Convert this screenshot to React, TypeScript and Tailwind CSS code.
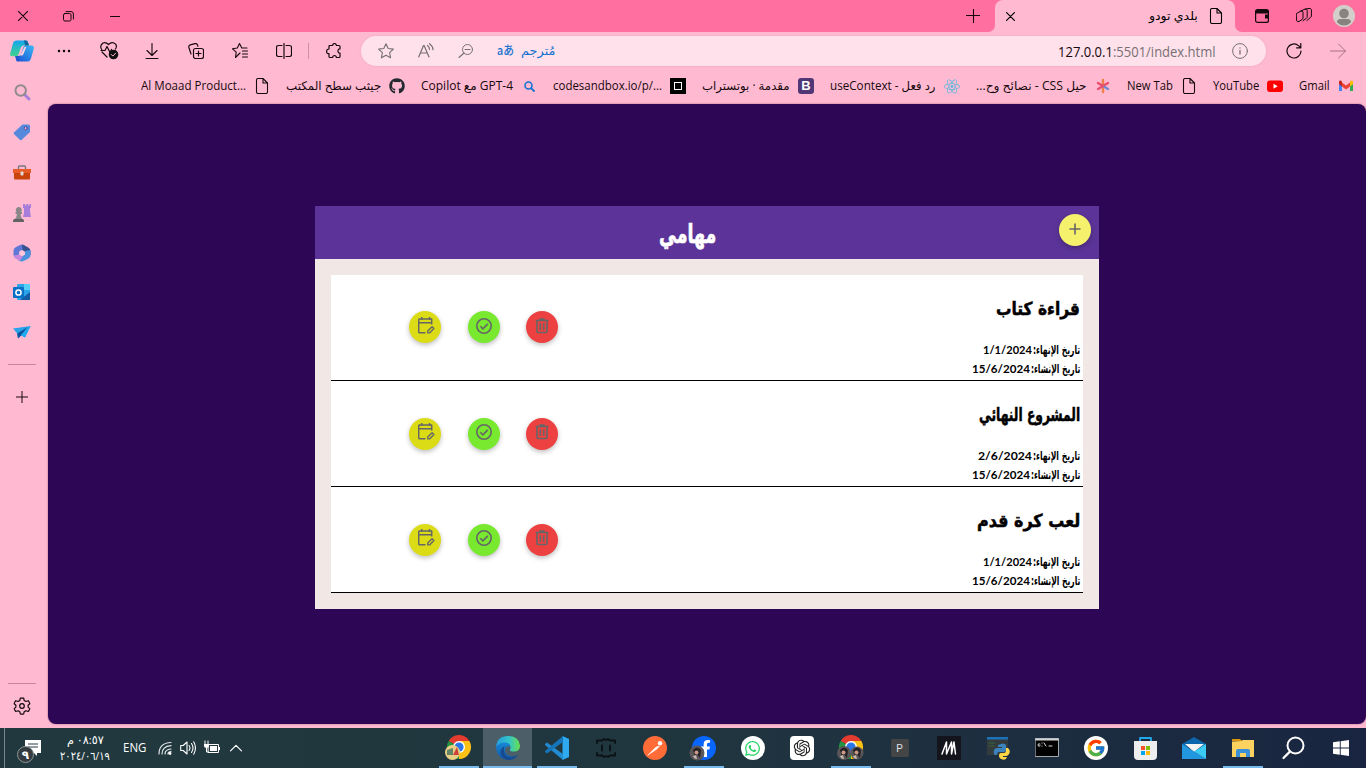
import React, { ReactNode, useLayoutEffect, useRef, useState } from 'react';
import { FaGithub, FaReact, FaWhatsapp, FaFacebookF } from 'react-icons/fa';
import { FcGoogle } from 'react-icons/fc';
import { RiOpenaiFill } from 'react-icons/ri';

const UI = "font-['Open_Sans','DejaVu_Sans',sans-serif]";

/* Text that is stretched or condensed to the width of its box. */
function Fit({ children, className = '', rtl = false }: { children: ReactNode; className?: string; rtl?: boolean }) {
  const outer = useRef<HTMLDivElement>(null);
  const inner = useRef<HTMLSpanElement>(null);
  const [scale, setScale] = useState(1);
  useLayoutEffect(() => {
    if (outer.current && inner.current) setScale(outer.current.clientWidth / inner.current.offsetWidth);
  }, []);
  return (
    <div ref={outer} dir="ltr" className={`flex shrink-0 ${className}`}>
      <span ref={inner} dir={rtl ? 'rtl' : 'ltr'} className="shrink-0 origin-left whitespace-nowrap" style={{ transform: `scaleX(${scale})` }}>
        {children}
      </span>
    </div>
  );
}

function Svg({ children, className = 'size-4', box = '0 0 16 16' }: { children: ReactNode; className?: string; box?: string }) {
  return (
    <svg viewBox={box} className={`shrink-0 ${className}`} fill="none" stroke="currentColor" strokeLinecap="round" strokeLinejoin="round">
      {children}
    </svg>
  );
}

const Doc = () => (
  <Svg><path d="M4 .5h5l4.500 4.500v9q0 1.500-1.500 1.500H4q-1.500 0-1.500-1.500V2Q2.500 .5 4 .5zM9 .5V5h4.500" strokeWidth="1.1" /></Svg>
);

function Cell({ children, className = 'w-11' }: { children: ReactNode; className?: string }) {
  return <div className={`flex shrink-0 items-center justify-center ${className}`}>{children}</div>;
}

function TitleBar() {
  return (
    <div className="flex h-8 shrink-0 justify-between bg-[#ff6fa0]">
      <div className="flex">
        <Cell className="w-[46px]"><Svg className="size-[10px]" box="0 0 10 10"><path d="M.3.3l9.400 9.400M9.700.3L.3 9.700" strokeWidth="1.1" /></Svg></Cell>
        <Cell className="w-[45px]"><Svg className="size-[11px]" box="0 0 11 11"><rect x=".5" y="2.500" width="7.500" height="7.500" rx="1.500" /><path d="M3 .6h5q2.400 0 2.400 2.400v5" /></Svg></Cell>
        <Cell className="ml-px w-[46px]"><Svg className="size-[10px]" box="0 0 10 10"><path d="M0 5.500h10" strokeLinecap="butt" /></Svg></Cell>
      </div>
      <div className="flex">
        <Cell className="w-[31px]"><Svg className="size-[14px]" box="0 0 14 14"><path d="M7.500 0v14M0 6.500h14" strokeWidth="1.1" /></Svg></Cell>
        <div className="flex w-[7px] shrink-0 items-end justify-end bg-[#ffbad2]"><div className="h-8 w-[7px] rounded-br-[7px] bg-[#ff6fa0]" /></div>
        <div className={`flex w-[240px] items-center rounded-t-lg bg-[#ffbad2] pl-[11px] pr-[11px] text-[12px] text-black ${UI}`}>
          <Svg className="size-[9px]" box="0 0 9 9"><path d="M.6.6l7.800 7.800M8.400.6L.6 8.400" strokeWidth="1.2" /></Svg>
          <div className="grow" />
          <Fit rtl className="w-[49px]">بلدي تودو</Fit>
          <div className="w-[10px]" />
          <Doc />
        </div>
        <div className="flex w-[131px] bg-[#ffbad2]">
          <div className="flex grow rounded-bl-[7px] bg-[#ff6fa0]">
            <Cell className="w-[54px]"><Svg className="size-[14px]" box="0 0 14 14"><rect x=".6" y=".6" width="12.800" height="12.800" rx="2" strokeWidth="1.200" /><path d="M.8 1h12.500v3.500H.8zM10 5.500h3.400v4H10z" fill="currentColor" stroke="none" /></Svg></Cell>
            <Cell className="w-[30px]"><Svg className="size-4"><path d="M.6 5.500l4-2.300q2-.8 2.400.8v6q0 1-1 1.500L3 13.500q-2 .8-2.400-1zM4.500 3.200L8.800 1.200q2-.7 2.400 1v6.500q0 1.200-1 1.800L7 12.700M9 1.200L13 .4q2-.3 2.400 1.300V8q0 1-1 1.500l-3.500 3" /></Svg></Cell>
            <Cell className="w-[50px]"><Svg className="size-[22px]" box="0 0 22 22"><circle cx="11" cy="11" r="11" fill="#d2cfcb" stroke="none" /><circle cx="11" cy="8.500" r="4.800" fill="#89837e" stroke="none" /><path d="M4 17q0-3 4-3h6q4 0 4 3-3 3.500-7 3.500T4 17z" fill="#89837e" stroke="none" /></Svg></Cell>
          </div>
        </div>
      </div>
    </div>
  );
}

function Copilot() {
  return (
    <Svg className="size-6" box="0 0 24 24">
      <defs>
        <linearGradient id="ca" x1="0" y1="0" x2="0" y2="1"><stop stopColor="#12a7ee" /><stop offset="1" stopColor="#3fd28c" /></linearGradient>
        <linearGradient id="cb" x1="1" y1="0" x2="0" y2="1"><stop stopColor="#38b9f5" /><stop offset="1" stopColor="#1b4fd4" /></linearGradient>
      </defs>
      <path d="M6 1.500h10q1.500 0 2 2l1 3h-5q-2.500 0-3.500 3l-2 6q-.6 1.700-2 1.700H2q-2.500 0-1.700-3L3 4q.8-2.500 3-2.500z" fill="url(#ca)" stroke="none" />
      <path d="M18 22.500H8q-1.500 0-2-2l-1-3.500h3q2.500 0 3.500-3l2-6q.6-1.500 2.500-1.500h5.500q3 0 2.300 3L21 19.500q-.8 3-3 3z" fill="url(#cb)" stroke="none" />
      <path d="M14 1.500h2q1.500 0 2 2l1 3h-4z" fill="#12679e" stroke="none" />
      <path d="M6 17h4l-2 5.500q-1.500 0-2-2z" fill="#2056d0" stroke="none" />
      <path d="M14.500 8h1.800l-2.800 7q-.6 1.500-2.300 1.500H9.500q1.500-.8 2.200-2.800z" fill="#ffd3e0" stroke="none" />
    </Svg>
  );
}

function Toolbar() {
  return (
    <div className="flex h-10 shrink-0 items-center pb-[2px]">
      <Cell className="w-[42px] pl-[2px]"><Copilot /></Cell>
      <Cell><Svg className="size-4"><path d="M3 8h.01M8 8h.01M13 8h.01" strokeWidth="2.500" /></Svg></Cell>
      <Cell className="w-11 pl-[2px]"><Svg className="size-5" box="0 0 20 20"><path d="M3 9Q0 5 4 2q3-1 5.500 1.500Q12 1 15 2q4 2 1.500 6M3 11l5 5M2 9.500h4l2-4 3 6 1.500-3" strokeWidth="1.200" /><circle cx="14.500" cy="13.500" r="4.800" fill="#111" stroke="none" /><path d="M12.300 13.500l1.600 1.600 2.800-3" stroke="#ffbad2" /></Svg></Cell>
      <Cell><Svg><path d="M8 .5v12M3 7.500l5 5 5-5M2 15.500h12" strokeWidth="1.100" /></Svg></Cell>
      <Cell><Svg><rect x="5.500" y="5.500" width="10" height="10" rx="2" strokeWidth="1.200" /><path d="M10.500 8v5M8 10.500h5M3 11L.9 4.500q-.5-2 1.300-2.600L7 .6q2-.4 2.600 1.500l.3 1.200" strokeWidth="1.200" /></Svg></Cell>
      <Cell><Svg><path d="M8 10L3.500 14.500 4.200 9.200.5 5.800l4.800-.8L7.500.6 9.800 5H15M10.500 8h5M10.500 11h5M10.500 14h5" strokeWidth="1.100" /></Svg></Cell>
      <Cell><Svg><path d="M6 2.500H2.500Q.5 2.500.5 4.500v7q0 2 2 2H6M10 2.500h3.500q2 0 2 2v7q0 2-2 2H10M8 .5v15" strokeWidth="1.200" /></Svg></Cell>
      <div className="ml-[2px] h-4 w-px bg-[#cf8fa6]" />
      <Cell className="ml-[3px] w-[44px]"><Svg><path d="M4 2.500h2.500Q7 .5 8.500.5t2 2H13q1 0 1 1V6q-2-.3-2 2t2 2v3.500q0 1-1 1h-2.500q-.5-2-2-2t-2 2H4q-1 0-1-1v-3Q.6 11 .6 8.500T3 6V3.500q0-1 1-1z" strokeWidth="1.200" /></Svg></Cell>
      <div className={`ml-[5px] flex h-[30px] w-[905px] items-center rounded-full bg-[#ffe1eb] pl-[5px] text-[#767073] shadow-[0_0_3px_#f0a6c0] ${UI}`}>
        <Cell className="w-10"><Svg><path d="M8 .8l2.200 4.700 5.200.6-3.800 3.600 1 5.100L8 12.300l-4.600 2.500 1-5.100L.6 6.100l5.200-.6z" strokeWidth="1.100" /></Svg></Cell>
        <Cell className="w-10"><Svg><path d="M.7 14L5.500 2.500h.6L11 14M2.600 10h6.500M9.500 2.500q2 1.500 2 4M11.500.7q3.500 2.500 3.500 6" strokeWidth="1.200" /></Svg></Cell>
        <Cell className="w-10"><Svg><circle cx="9.500" cy="6.500" r="5" /><path d="M7 6.500h5M6 10L1 14.500" strokeWidth="1.100" /></Svg></Cell>
        <div className="ml-[11px] w-[17px] font-['Noto_Sans_CJK_JP',sans-serif] text-[12px] leading-[20px] text-[#1473cf]"><Fit className="w-[17px] pb-[3px]"><b className="font-[500]">aあ</b></Fit></div>
        <Fit rtl className="ml-[7px] w-[34px] text-[12.500px] text-[#1473cf]">مُترجم</Fit>
        <div className="grow" />
        <Fit className="w-[158px] text-[14px]"><span className="text-[#16080d]">127.0.0.1</span>:5501/index.html</Fit>
        <div className="ml-[16px] mr-[18px]"><Svg><circle cx="8" cy="8" r="7.400" /><path d="M8 7.500V11M8 5v.01" strokeWidth="1.300" /></Svg></div>
      </div>
      <Cell className="ml-[6px] w-[44px]"><Svg><path d="M15 8A7 7 0 1 1 12.500 2.600L14.500 4.500M14.800.5v4.300h-4.300" strokeWidth="1.200" /></Svg></Cell>
      <Cell><Svg className="size-4 text-[#a5727f]"><path d="M.5 8h15M8.500 1l7 7-7 7" /></Svg></Cell>
    </div>
  );
}

function Bookmark({ text, w, icon, rtl = false }: { text: string; w: string; icon: ReactNode; rtl?: boolean }) {
  return (
    <div className="mr-4 flex shrink-0 items-center gap-2">
      <Fit rtl={rtl} className={w}>{text}</Fit>
      <div className="flex size-4 shrink-0 items-center justify-center">{icon}</div>
    </div>
  );
}

function Bookmarks() {
  return (
    <div className={`flex h-8 shrink-0 items-center overflow-hidden pb-[4px] pl-[93px] text-[12px] text-[#16080d] ${UI}`}>
      <Bookmark w="w-[105px]" text="Al Moaad Product..." icon={<Doc />} />
      <Bookmark rtl w="w-[95px]" text="جيثب سطح المكتب" icon={<FaGithub size={16} color="#24292f" />} />
      <Bookmark w="w-[92px]" text="Copilot مع GPT-4" icon={<Svg className="size-[11px]" box="0 0 11 11"><circle cx="4.500" cy="4.500" r="3.500" stroke="#1473cf" strokeWidth="1.600" /><path d="M7.300 7.300L10 10" stroke="#1473cf" strokeWidth="1.800" /></Svg>} />
      <Bookmark w="w-[109px]" text="codesandbox.io/p/..." icon={<div className="flex size-4 items-center justify-center bg-black"><div className="size-2 border border-white" /></div>} />
      <Bookmark rtl w="w-[88px]" text="مقدمة · بوتستراب" icon={<div className="flex size-4 items-center justify-center rounded-[3px] bg-[#513776] font-['Liberation_Sans',sans-serif] text-[13px] font-bold text-white">B</div>} />
      <Bookmark w="w-[106px]" text="useContext - رد فعل" icon={<FaReact size={17} color="#58b8de" />} />
      <Bookmark rtl w="w-[111px]" text="حيل CSS - نصائح وح..." icon={<Svg className="size-4"><path d="M8 8V2M8 8v6" stroke="#f08044" strokeWidth="2.400" /><path d="M8 8l5-3M8 8L3 5" stroke="#ea4e68" strokeWidth="2.400" /><path d="M8 8l5 3" stroke="#728bcf" strokeWidth="2.400" /><path d="M8 8l-5 3" stroke="#e85175" strokeWidth="2.400" /></Svg>} />
      <Bookmark w="w-[46px]" text="New Tab" icon={<Doc />} />
      <Bookmark w="w-[46px]" text="YouTube" icon={<Svg><rect y="2.500" width="16" height="11.500" rx="3" fill="#f00" stroke="none" /><path d="M6.500 5.800v5l4.200-2.500z" fill="#fff" stroke="none" /></Svg>} />
      <Bookmark w="w-[31px]" text="Gmail" icon={<Svg><path d="M1 4v9h3V6z" fill="#4285f4" stroke="none" /><path d="M12 6v7h3V4z" fill="#34a853" stroke="none" /><path d="M4 4.500L8 7.500l4-3V8.500L8 11.500 4 8.500z" fill="#ea4335" stroke="none" /><path d="M1 4q0-2 2-1.300l1 .8v5L1 6.300z" fill="#c5221f" stroke="none" /><path d="M15 4q0-2-2-1.300l-1 .8v5l3-2.200z" fill="#fbbc04" stroke="none" /></Svg>} />
    </div>
  );
}

function Sidebar() {
  const c = 'h-10 w-11';
  return (
    <div className="flex w-12 shrink-0 flex-col">
      <Cell className={c}><Svg className="size-[17px]" box="0 0 17 17"><path d="M10.500 10.500l4.500 4.500" stroke="#a87fdd" strokeWidth="3" /><circle cx="6.700" cy="6.500" r="5.200" stroke="#918b8e" strokeWidth="2" /></Svg></Cell>
      <Cell className={c}><Svg className="size-[18px]" box="0 0 18 18"><path d="M9.500 1.500h6q1.500 0 1.500 1.500v6L8.800 16.800q-1 .8-2 0L1.200 11.300q-.9-1 0-2z" fill="#5688dc" stroke="none" /><circle cx="12.700" cy="5.200" r="1.500" fill="#fbd" stroke="#514a9b" /></Svg></Cell>
      <Cell className={c}><Svg className="mt-px size-[18px]" box="0 0 18 18"><path d="M5.500 5V3q0-1 1-1h5q1 0 1 1v2" stroke="#77777c" strokeWidth="1.400" /><path d="M0 5h18v4H0z" fill="#e65b27" stroke="none" /><path d="M1 9h16v5.500q0 1-1 1H2q-1 0-1-1z" fill="#ca420c" stroke="none" /><rect x="7.500" y="7.500" width="3" height="4" rx="1" fill="#ddd" stroke="none" /></Svg></Cell>
      <Cell className={c}><Svg className="mt-px size-[18px]" box="0 0 18 18"><path d="M10 0h2v1.500h1.200V0h2v1.500h1.200V0H18v4h-1l.2 5 .8 4h-8l1-4V4h-1z" fill="#a67ddb" stroke="none" /><path d="M6 3a3 3 0 0 1 2 5h1v2H7.500l1 4q2.500 1 2.500 4H0q0-3 3-4l1-4H2.500V8h1A3 3 0 0 1 6 3z" fill="#8b8789" stroke="none" /><path d="M0 18q0-3 2-3h7q2 0 2 3z" fill="#646166" stroke="none" /></Svg></Cell>
      <Cell className={c}><Svg className="mt-px size-[18px]" box="0 0 18 18"><path d="M9 .5q3 0 3.500 2L10 6 6.500 7v5L3 14.500Q.5 13 .5 10.500V7Q.5 4 3 3l4-2z" fill="#5f78d8" stroke="none" /><path d="M9 .5l5 2.300q3.500 1.500 3.500 5v3.500L12 8 9.500 6z" fill="#35518f" stroke="none" /><path d="M17.500 6v5q0 2.500-2 3.500l-5 2.500q-2 1-5-.5L9 12l3-1.500V7z" fill="#4c91de" stroke="none" /><path d="M.5 11.500l6-1L10 12l-3 5-4.500-2.500Q.5 13 .5 11.500z" fill="#c388dd" stroke="none" /><path d="M9 6.200l2.700 1.500v3L9 12.200l-2.700-1.500v-3z" fill="#ffc4da" stroke="none" /></Svg></Cell>
      <Cell className={c}><Svg className="size-[18px]" box="0 0 18 18"><rect x="4" y="1" width="13" height="16" rx="1" fill="#29a4e8" stroke="none" /><path d="M11 1h6v6h-6z" fill="#57d0f5" stroke="none" /><path d="M17 9v8H7z" fill="#155ca7" stroke="none" /><rect x="0" y="4" width="11" height="11" rx="1" fill="#0870c5" stroke="none" /><circle cx="5.500" cy="9.500" r="2.600" stroke="#fff" strokeWidth="1.500" /></Svg></Cell>
      <Cell className={c}><Svg className="size-[18px]" box="0 0 18 18"><path d="M0 5.500L17.500 3 12 14.500l-4-2-3 3-.8-5z" fill="#28a2e8" stroke="none" /><path d="M4.200 10.500L14 4.500 8 12.500l-3 3z" fill="#0b519c" stroke="none" /><path d="M8 12l9.500-9L12 14.500z" fill="#20aaf0" stroke="none" /></Svg></Cell>
      <div className="ml-2 mt-[12px] h-px w-7 bg-[#c9869b]" />
      <Cell className="mt-[22px] h-5 w-[43px]"><Svg className="size-3" box="0 0 12 12"><path d="M6 0v12M0 6h12" /></Svg></Cell>
      <div className="grow" />
      <div className="ml-2 h-px w-7 bg-[#c9869b]" />
      <Cell className="mb-[12px] mt-[12px] h-5 w-11"><Svg className="size-[18px]" box="0 0 18 18"><path d="M9 1q1 0 1.700.2l.5 2.300 1.700 1 2.300-.8q1 1.200 1.600 3l-1.700 1.500v1.900l1.700 1.500q-.5 1.600-1.600 2.900l-2.300-.8-1.700 1-.5 2.200q-1.700.4-3.400 0l-.5-2.200-1.700-1-2.300.8Q1.700 13.300 1.200 11.600l1.700-1.500V8.200L1.200 6.700q.5-1.700 1.600-3l2.300.8 1.700-1 .5-2.300z" strokeWidth="1.200" /><circle cx="9" cy="9" r="2.300" strokeWidth="1.200" /></Svg></Cell>
    </div>
  );
}

const Trash = () => (
  <Svg className="size-4"><path d="M1.700 2.500h12.600M5.300 1.100h5.400M3 3v10.500q0 1 1 1h8q1 0 1-1V3M6.300 5.300v6.700M9.700 5.300v6.700" stroke="#666" strokeWidth="1.600" strokeLinecap="butt" /></Svg>
);
const Check = () => (
  <Svg className="size-4"><circle cx="8" cy="8" r="7.200" stroke="#666" strokeWidth="1.600" /><path d="M4.300 8.200l2.600 2.600 4.900-4.900" stroke="#666" strokeWidth="1.600" strokeLinecap="butt" strokeLinejoin="miter" /></Svg>
);
const EditCalendar = () => (
  <Svg className="size-[17px]" box="0 0 17 17">
    <path d="M3.700 0v3M11.500 0v3M7.500 15.700H1.700q-1 0-1-1V3q0-1 1-1h12v5.500M.7 5.800h13" stroke="#666" strokeWidth="1.500" strokeLinecap="butt" />
    <path d="M9.800 15.900v-1.800l4.300-4.300 1.800 1.800-4.300 4.300z" stroke="#666" strokeWidth="1.400" />
  </Svg>
);

function Round({ color, children }: { color: string; children: ReactNode }) {
  return <div className={`flex size-8 shrink-0 items-center justify-center rounded-full shadow-[0_2px_5px_rgba(0,0,0,0.26)] ${color}`}>{children}</div>;
}

const KUFI = "font-['DejaVu_Sans',sans-serif]";

interface Task { title: string; titleW: string; end: string; endW: string; pad: string; lift: string }
const tasks: Task[] = [
  { title: 'قراءة كتاب', titleW: 'w-[84px]', end: '1/1/2024', endW: 'w-[49px]', pad: 'pt-[36px]', lift: 'pb-[3px]' },
  { title: 'المشروع النهائي', titleW: 'w-[101px]', end: '2/6/2024', endW: 'w-[54px]', pad: 'pt-[37px]', lift: 'pb-[5px]' },
  { title: 'لعب كرة قدم', titleW: 'w-[103px]', end: '1/1/2024', endW: 'w-[49px]', pad: 'pt-[37px]', lift: 'pb-[5px]' },
];

function DateLine({ label, labelW, value, valueW }: { label: string; labelW: string; value: string; valueW: string }) {
  return (
    <div className="flex h-[19px] items-center justify-end">
      <Fit className={`${valueW} font-['Lato',sans-serif] text-[12px] font-bold`}>{value}</Fit>
      <Fit rtl className={`ml-px ${labelW} ${KUFI} text-[12px] font-bold`}>{label}</Fit>
    </div>
  );
}

function TaskRow({ t }: { t: Task }) {
  return (
    <div className="flex h-[106px] justify-between border-b border-black bg-white pl-[78px] pr-[3px] text-black">
      <div className={`flex ${t.pad}`}>
        <Round color="bg-[#dbdc16]"><div className={`pl-[2px] ${t.lift}`}><EditCalendar /></div></Round>
        <div className="w-[27px]" />
        <Round color="bg-[#78e92f]"><div className={t.lift}><Check /></div></Round>
        <div className="w-[26px]" />
        <Round color="bg-[#ed4141]"><div className={t.lift}><Trash /></div></Round>
      </div>
      <div className="flex flex-col items-end pt-[21px]">
        <Fit rtl className={`h-[26px] ${t.titleW} ${KUFI} text-[18px] font-bold leading-[26px] [-webkit-text-stroke:0.5px_#000]`}>{t.title}</Fit>
        <div className="h-[18px]" />
        <DateLine label="تاريخ الإنهاء:" labelW="w-[47px]" value={t.end} valueW={t.endW} />
        <DateLine label="تاريخ الإنشاء:" labelW="w-[49px]" value="15/6/2024" valueW="w-[58px]" />
      </div>
    </div>
  );
}

function TodoCard() {
  return (
    <div className="w-[784px] bg-[#f1e8e6]">
      <div className="flex h-[53px] bg-[#5c3499]">
        <div className="flex grow pl-[344px]">
          <Fit rtl className={`w-[57px] ${KUFI} text-[26px] font-bold leading-[56px] text-white [-webkit-text-stroke:0.7px_#fff]`}>مهامي</Fit>
        </div>
        <div className="pr-2 pt-2">
          <Round color="bg-[#f6f16c]"><Svg className="mb-[3px] mr-px size-3" box="0 0 12 12"><path d="M6 .5v11M.5 6h11" stroke="#666" strokeWidth="1.600" strokeLinecap="butt" /></Svg></Round>
        </div>
      </div>
      <div className="p-4">{tasks.map((t) => <TaskRow key={t.title} t={t} />)}</div>
    </div>
  );
}

function Chrome() {
  return (
    <>
      <path d="M12 12L1.600 6A12 12 0 0 1 22.400 6z" fill="#e33b2e" stroke="none" />
      <path d="M12 12L22.400 6A12 12 0 0 1 12 24z" fill="#fbc116" stroke="none" />
      <path d="M12 12v12A12 12 0 0 1 1.600 6z" fill="#229342" stroke="none" />
      <path d="M12 6h10.400l-5.200 9z" fill="#fbc116" stroke="none" />
      <circle cx="12" cy="12" r="6" fill="#fff" stroke="none" />
      <circle cx="12" cy="12" r="4.600" fill="#2a75e8" stroke="none" />
    </>
  );
}

function Portrait({ x, y, r = 6 }: { x: number; y: number; r?: number }) {
  return (
    <g transform={`translate(${x} ${y})`} stroke="none">
      <circle r={r} fill="#5b5657" />
      <path d="M-4-3Q0-8 4-3L3 5l-3-4-2 3z" fill="#242227" />
      <circle cx="-.5" cy="-.5" r="2" fill="#c89984" />
      <path d="M-4 3l3-1 1 4q-3 0-4-3z" fill="#c9bab3" />
    </g>
  );
}

const B = '-2 0 28 26';

const apps: { icon: ReactNode; open?: boolean; active?: boolean }[] = [
  { open: true, icon: <Svg className="h-[26px] w-7" box={B}><Chrome /><circle cx="5.500" cy="17.500" r="7.500" fill="#e8cf85" stroke="none" /><path d="M0 15l6-2v7H0z" fill="#648468" stroke="none" /><path d="M6 20l4-8 2 8z" fill="#cf4137" stroke="none" /></Svg> },
  { open: true, active: true, icon: <Svg className="size-6" box="0 0 24 24"><defs><linearGradient id="ea" x1="0" x2="1"><stop stopColor="#249de0" /><stop offset=".55" stopColor="#34c4c8" /><stop offset="1" stopColor="#67e04c" /></linearGradient><linearGradient id="eb" x1="0" y1="0" x2="0" y2="1"><stop stopColor="#1687d6" /><stop offset="1" stopColor="#1257a5" /></linearGradient></defs><path d="M0 11Q1 0 12 0t12 9.500q0 6-6 6-4.500 0-4-2 .8-1 .4-3Q13.500 7 9 7q-5 0-9 4z" fill="url(#ea)" stroke="none" /><path d="M0 11Q3 6.500 9 6.500q4.500 0 5.400 4-4.400-1-5.400 3-.7 6 8 7 3 0 5-1.500Q18.500 24 12 24 1 23 0 11z" fill="url(#eb)" stroke="none" /><path d="M8.500 10Q6.500 16 10 19.500q4 3.500 12-.5-4 5-10 5-6-1.500-7.500-7-.4-4 4-7z" fill="#174b91" stroke="none" /></Svg> },
  { open: true, icon: <Svg className="size-6" box="0 0 24 24"><path d="M17.500 0L24 3v18l-6.500 3z" fill="#2fa9ef" stroke="none" /><path d="M0 8l2-1.600L18 18v6L0 9z" fill="#238bd2" stroke="none" /><path d="M0 16l2 1.600L18 6V0L0 15z" fill="#1674b8" stroke="none" /></Svg> },
  { icon: <Svg className="size-[22px]" box="0 0 22 22"><path d="M2 6V3.500h5L9 2l2 1 2-1 2 1.500h5V6M2 16v2.500h5L9 20l2-1 2 1 2-1.500h5V16M7 8.500v5M15 8.500v5" stroke="#0b1216" strokeWidth="1.900" /></Svg> },
  { icon: <Svg className="size-6" box="0 0 24 24"><circle cx="12" cy="12" r="12" fill="#ff6c37" stroke="none" /><path d="M5 19l8-8 3.500-1L14 13l-6 4z" fill="#fff" strokeWidth=".5" stroke="#fff" /><circle cx="17" cy="7.300" r="2.200" fill="#fff" stroke="none" /></Svg> },
  { open: true, icon: <div className="relative flex size-6 items-center justify-center rounded-full bg-[#0866ff] text-white"><FaFacebookF size={17} className="ml-[3px]" /><svg viewBox="0 0 16 16" className="absolute -left-[3px] top-[9px] size-4"><Portrait x={8} y={8} r={7.5} /></svg></div> },
  { icon: <div className="flex size-6 items-center justify-center rounded-full bg-white"><FaWhatsapp size={17} color="#25d366" /></div> },
  { icon: <div className="flex size-6 items-center justify-center rounded-[4px] bg-white"><RiOpenaiFill size={20} color="#222" /></div> },
  { open: true, icon: <Svg className="h-[26px] w-7" box={B}><Chrome /><Portrait x={5} y={18} r={7} /><Portrait x={18} y={18} r={6.5} /></Svg> },
  { icon: <div className="flex size-[18px] items-center justify-center rounded-[2px] bg-[#454545] font-['Liberation_Sans',sans-serif] text-[10px] text-[#dfe4ea]">P</div> },
  { icon: <Svg className="size-6" box="0 0 24 24"><path d="M0 0h24v24H0z" fill="#14141c" stroke="none" /><path d="M5 18L9.500 6v12L14.500 6v12M14.500 18L17 6l1.500 12" stroke="#fff" strokeWidth="1.500" /></Svg> },
  { icon: <Svg className="size-6" box="0 0 24 24"><path d="M1 1h21v18H1z" fill="#333b3c" stroke="none" /><path d="M1 1h21v2.500H1z" fill="#1c72b8" stroke="none" /><path d="M3 7h6M3 10h5" stroke="#386442" /><path d="M12 9q6-3 8 0v5q0 2-2 2h-5q-2 0-2 3H9q-2-1-1-5 1-2 3-2h5v-1h-4z" fill="#3c83bd" stroke="none" /><path d="M20 12h2q3 3 1 6-1 2-3 2h-3v1h4q-1 4-6 2-2-1-2-3 0-3 2-3h3q2 0 2-3z" fill="#fdd545" stroke="none" /></Svg> },
  { icon: <Svg className="h-5 w-6" box="0 0 24 20"><path d="M.5.5h23v18H.5z" fill="#020202" stroke="#a5aaad" /><path d="M1 1.500h22" stroke="#d0d2d3" strokeWidth="2" /><path d="M5 6q-2-1-2 1t2 1M7 5v.1M7 8v.1M9 5l2 3M14 8h3" stroke="#ddd" /></Svg> },
  { icon: <div className="flex size-6 items-center justify-center rounded-full bg-white"><FcGoogle size={20} /></div> },
  { icon: <Svg className="size-6" box="0 0 24 24"><path d="M7 6V2h11v4" stroke="#21a8ec" strokeWidth="1.800" /><path d="M1 5h23v15q0 4-4 4H5q-4 0-4-4z" fill="#eee" stroke="none" /><path d="M8 10h4v4H8z" fill="#f35325" stroke="none" /><path d="M13 10h4v4h-4z" fill="#81bc06" stroke="none" /><path d="M8 15h4v4H8z" fill="#05a6f0" stroke="none" /><path d="M13 15h4v4h-4z" fill="#ffba08" stroke="none" /></Svg> },
  { icon: <Svg className="size-6" box="0 0 24 24"><path d="M0 8l12-7 12 7v3H0z" fill="#0d66ad" stroke="none" /><path d="M3 8h19l-10 8z" fill="#f4f4f4" stroke="none" /><path d="M0 8l12 7.500L24 23H0z" fill="#2097df" stroke="none" /><path d="M24 8v15L12 15.500z" fill="#3ccbf5" stroke="none" /></Svg> },
  { open: true, icon: <Svg className="size-6" box="0 0 24 24"><path d="M1 3h8l2 2H1z" fill="#dc960c" stroke="none" /><path d="M1 5.500l9-.5 2-1h11v17H1z" fill="#fbd260" stroke="none" /><path d="M5 21v-6q0-2 2-2h10q2 0 2 2v6h-4v-4H9v4z" fill="#398fd8" stroke="none" /></Svg> },
  { icon: <Svg className="ml-[2px] size-6" box="0 0 24 24"><circle cx="14.500" cy="9.500" r="8" stroke="#fff" strokeWidth="2" /><path d="M9 15.500L2.500 22" stroke="#fff" strokeWidth="2.300" /></Svg> },
  { icon: <Svg className="ml-px size-4"><path d="M0 2.300L6.800 1.300v6.200H0zM7.700 1.200L16 0v7.500H7.700zM0 8.400h6.800v6.300L0 13.700zM7.700 8.400H16V16l-8.300-1.200z" fill="#fff" stroke="none" /></Svg> },
];

function Taskbar() {
  return (
    <div className={`flex h-10 shrink-0 items-center bg-gradient-to-r from-[#21393e] via-[#20363f] to-[#192540] text-white ${UI}`}>
      <div className="ml-1 h-10 w-px bg-[#76888c]" />
      <div className="relative ml-[13px] flex h-10 w-[42px]">
        <svg viewBox="0 0 16 16" className="ml-[7px] mt-3 size-4"><path d="M0 0h16v13h-4v3l-3-3H0z" fill="#fff" /><path d="M3 4h10M3 7h10" stroke="#263d43" /></svg>
        <div className="absolute -left-px top-[18px] flex size-[17px] items-center justify-center rounded-full border border-[#8c9698] bg-[#333b3f] font-['DejaVu_Sans',sans-serif] text-[12px] font-bold leading-none">٩</div>
      </div>
      <div className="flex w-[50px] flex-col items-center text-[11.500px] leading-[16px]">
        <Fit rtl className="w-[37px]">٠٨:٥٧ م</Fit>
        <Fit className="w-[50px]">٢٠٢٤/٠٦/١٩</Fit>
      </div>
      <Fit className="ml-[13px] w-[23px] text-[12px]">ENG</Fit>
      <Svg className="ml-[12px] size-[14px]" box="0 0 14 14"><path d="M1 13Q1 2 13 1.500M4 13q0-7.500 9-8.300M7 13q0-4.500 6-5M10 13q0-2 3-2.300" stroke="#e0e5e6" strokeWidth="1.200" /><circle cx="12" cy="12.500" r="1.400" fill="#fff" stroke="none" /></Svg>
      <Svg className="ml-[8px] size-4"><path d="M.7 5.500h2.500L7 2v12L3.200 10.500H.7zM9 5.500q2 2.500 0 5M11.500 3.500q3 4.500 0 9M13.700 1.800q3.500 6 0 12.400" stroke="#fff" strokeWidth="1.100" /></Svg>
      <Svg className="ml-[8px] size-4"><rect x="4.500" y="4.500" width="10" height="8" stroke="#fff" /><path d="M6 6h7v5H6zM15 7h1v3h-1z" fill="#fff" stroke="none" /><path d="M1 1v3M4 1v3" stroke="#fff" /><path d="M0 4h5v2q0 2-2.500 2T0 6z" fill="#fff" stroke="none" /><path d="M2.500 8v4h2" stroke="#fff" /></Svg>
      <Svg className="ml-[10px] h-2 w-[12px]" box="0 0 12 8"><path d="M.5 6.800L6 1.300l5.500 5.500" stroke="#fff" strokeWidth="1.200" /></Svg>
      <div className="grow" />
      <div className="mr-px flex">
        {apps.map((a, i) => (
          <div key={i} className={`flex h-10 w-[49px] flex-col items-center ${a.active ? 'bg-[#4c5e68]' : ''}`}>
            <div className="flex h-[38px] items-center justify-center pt-[2px]">{a.icon}</div>
            {a.open && <div className={`h-[2px] shrink-0 bg-[#76b9ed] ${a.active ? 'w-[49px]' : 'w-10'}`} />}
          </div>
        ))}
      </div>
    </div>
  );
}

export default function App() {
  return (
    <div className="flex h-[768px] w-[1366px] flex-col overflow-hidden bg-[#ffbad2] text-[#16080d]">
      <TitleBar />
      <Toolbar />
      <div className="flex min-h-0 grow">
        <Sidebar />
        <div className="flex min-w-0 grow flex-col">
          <Bookmarks />
          <div className="mb-1 flex grow justify-center rounded-lg bg-[#2d0755] pt-[102px] shadow-[0_0_2px_#a0607a]">
            <div><TodoCard /></div>
          </div>
        </div>
      </div>
      <Taskbar />
    </div>
  );
}
